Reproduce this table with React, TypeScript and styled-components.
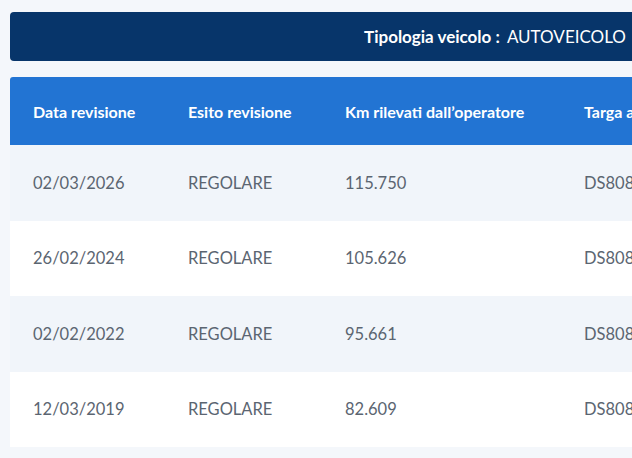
import React from "react";
import styled, { createGlobalStyle } from "styled-components";

const Global = createGlobalStyle`
  html, body { margin: 0; padding: 0; background: #f4f7fb; overflow: hidden; }
  body { font-family: Lato, "Open Sans", "Liberation Sans", sans-serif; }
`;

const Page = styled.div`
  width: 1000px;
  padding: 12px 0 0 10px;
  display: flex;
  flex-direction: column;
  gap: 16px;
`;

const TypeBar = styled.div`
  width: 970px;
  height: 49px;
  background: #07356a;
  border-radius: 4px;
  display: flex;
  align-items: center;
  justify-content: center;
  color: #ffffff;
  font-size: 17px;
  gap: 7px;
`;

const Label = styled.span`
  font-weight: 700;
`;

const Table = styled.div`
  width: 970px;
  display: flex;
  flex-direction: column;
`;

const Row = styled.div<{ $variant: "head" | "odd" | "even" }>`
  display: grid;
  grid-template-columns: 155px 157px 239px 1fr;
  align-items: center;
  padding-left: 23px;
  height: ${(p) => (p.$variant === "head" ? "68px" : "75.5px")};
  background: ${(p) =>
    p.$variant === "head" ? "#2274d3" : p.$variant === "even" ? "#ffffff" : "#f1f5fa"};
  border-radius: ${(p) => (p.$variant === "head" ? "3px 3px 0 0" : "0")};
  color: ${(p) => (p.$variant === "head" ? "#ffffff" : "#5b6571")};
  font-weight: ${(p) => (p.$variant === "head" ? 700 : 400)};
  font-size: ${(p) => (p.$variant === "head" ? "16px" : "16.5px")};
`;

const Cell = styled.div`
  white-space: nowrap;
`;

const rows = [
  ["02/03/2026", "REGOLARE", "115.750", "DS808"],
  ["26/02/2024", "REGOLARE", "105.626", "DS808"],
  ["02/02/2022", "REGOLARE", "95.661", "DS808"],
  ["12/03/2019", "REGOLARE", "82.609", "DS808"],
];

export default function App() {
  return (
    <>
      <Global />
      <Page>
        <TypeBar>
          <Label>Tipologia veicolo :</Label>
          <span>AUTOVEICOLO</span>
        </TypeBar>
        <Table>
          <Row $variant="head">
            <Cell>Data revisione</Cell>
            <Cell>Esito revisione</Cell>
            <Cell>Km rilevati dall’operatore</Cell>
            <Cell>Targa al momento della revisione</Cell>
          </Row>
          {rows.map((r, i) => (
            <Row key={i} $variant={i % 2 === 0 ? "odd" : "even"}>
              {r.map((c, j) => (
                <Cell key={j}>{c}</Cell>
              ))}
            </Row>
          ))}
        </Table>
      </Page>
    </>
  );
}
